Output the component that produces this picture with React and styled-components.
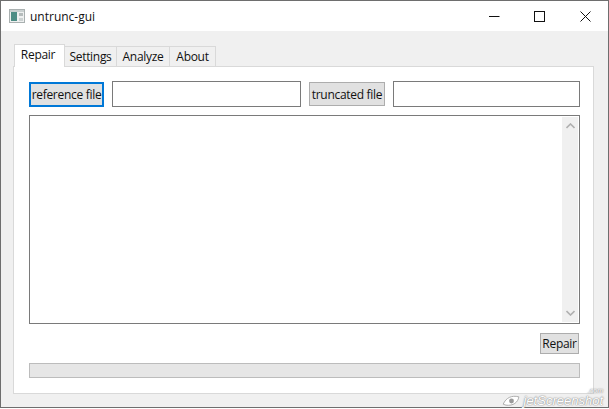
import React from "react";
import styled, { createGlobalStyle } from "styled-components";

const Global = createGlobalStyle`
  html, body { margin: 0; padding: 0; background: #fff; overflow: hidden; }
  * { box-sizing: border-box; }
`;

const Window = styled.div`
  position: relative;
  width: 609px;
  height: 408px;
  display: flex;
  flex-direction: column;
  border: 1px solid #6e6e6e;
  background: #f0f0f0;
  font-family: "Open Sans", "Noto Sans", sans-serif;
  font-size: 12px;
  letter-spacing: -0.3px;
  color: #111;
`;

const TitleBar = styled.div`
  height: 30px;
  display: flex;
  align-items: center;
  background: #fff;
  padding-left: 8px;
`;

const Title = styled.span`
  margin-left: 5px;
  flex: 1;
  font-size: 12px;
  letter-spacing: 0;
`;

const CaptionButton = styled.div`
  width: 45.5px;
  height: 30px;
  display: flex;
  align-items: center;
  justify-content: center;
`;

const Client = styled.div`
  flex: 1;
  display: flex;
  flex-direction: column;
  padding: 13px 14px 13px 12px;
`;

const TabBar = styled.div`
  display: flex;
  align-items: flex-end;
  padding-left: 1px;
  position: relative;
  z-index: 1;
  margin-bottom: -1px;
`;

const Tab = styled.div`
  width: ${(p) => p.$w}px;
  height: ${(p) => (p.$active ? 23 : 21)}px;
  display: flex;
  align-items: center;
  justify-content: center;
  background: ${(p) => (p.$active ? "#fff" : "#f0f0f0")};
  border: 1px solid #d9d9d9;
  border-bottom: ${(p) => (p.$active ? "none" : "1px solid #d9d9d9")};
  margin-left: ${(p) => (p.$active ? 0 : -1)}px;
  padding-bottom: ${(p) => (p.$active ? 3 : 0)}px;
  padding-right: ${(p) => (p.$active ? 3 : 0)}px;
`;

const Pane = styled.div`
  flex: 1;
  display: flex;
  flex-direction: column;
  background: #fff;
  border: 1px solid #d9d9d9;
  padding: 14px 13px 14px 15px;
`;

const FileRow = styled.div`
  display: flex;
  align-items: center;
  gap: 8px;
  height: 26px;
`;

const Button = styled.div`
  width: ${(p) => p.$w}px;
  height: ${(p) => p.$h}px;
  display: flex;
  align-items: center;
  justify-content: center;
  white-space: nowrap;
  background: #e1e1e1;
  border: ${(p) => (p.$focus ? "2px solid #0078d7" : "1px solid #adadad")};
`;

const PathInput = styled.div`
  flex: ${(p) => p.$grow};
  height: 26px;
  background: #fff;
  border: 1px solid #7a7a7a;
`;

const LogBox = styled.div`
  height: 209px;
  margin-top: 8px;
  display: flex;
  justify-content: flex-end;
  background: #fff;
  border: 1px solid #7a7a7a;
`;

const ScrollBar = styled.div`
  width: 16px;
  margin: 1px 1px 1px 0;
  background: #f0f0f0;
  display: flex;
  flex-direction: column;
  justify-content: space-between;
`;

const ScrollArrow = styled.div`
  height: 18px;
  display: flex;
  align-items: center;
  justify-content: center;
`;

const ActionRow = styled.div`
  display: flex;
  justify-content: flex-end;
  margin-top: 9px;
  padding-right: 1px;
`;

const Progress = styled.div`
  height: 15px;
  margin-top: 9px;
  background: #e6e6e6;
  border: 1px solid #bcbcbc;
`;

const Watermark = styled.div`
  position: absolute;
  right: 5px;
  bottom: 0;
  display: flex;
  align-items: center;
  gap: 3px;
  font-family: "Liberation Sans", sans-serif;
  font-style: italic;
  font-size: 13px;
  line-height: 13px;
  letter-spacing: 0;
  color: #fff;
  text-shadow: 0 0 1px #777, 0 0 2px #999;
`;

const WatermarkTld = styled.span`
  position: absolute;
  right: 0;
  top: -7px;
  font-size: 7px;
  line-height: 7px;
`;

const AppIcon = () => (
  <svg width="16" height="14" viewBox="0 0 16 14">
    <rect x="0.5" y="0.5" width="15" height="13" fill="#eef0f0" stroke="#a9b0b0" />
    <rect x="1" y="1" width="14" height="2" fill="#c9d0d0" />
    <rect x="2" y="3" width="6" height="9" fill="#4d8d85" />
    <rect x="10" y="4" width="4" height="3" fill="#b5bcbc" />
    <rect x="10" y="9" width="4" height="3" fill="#ccd2d2" />
  </svg>
);

const Chevron = ({ up }) => (
  <svg width="9" height="6" viewBox="0 0 9 6">
    <path d={up ? "M0.5 5 L4.5 1 L8.5 5" : "M0.5 1 L4.5 5 L8.5 1"} fill="none" stroke="#b0b0b0" strokeWidth="1.6" />
  </svg>
);

export default function App() {
  return (
    <>
      <Global />
      <Window>
        <TitleBar>
          <AppIcon />
          <Title>untrunc-gui</Title>
          <CaptionButton>
            <svg width="11" height="11" viewBox="0 0 11 11">
              <path d="M0 5.5 H10.5" stroke="#111" fill="none" />
            </svg>
          </CaptionButton>
          <CaptionButton>
            <svg width="11" height="11" viewBox="0 0 11 11">
              <rect x="0.5" y="0.5" width="10" height="10" stroke="#111" fill="none" />
            </svg>
          </CaptionButton>
          <CaptionButton>
            <svg width="11" height="11" viewBox="0 0 11 11">
              <path d="M0.5 0.5 L10.5 10.5 M10.5 0.5 L0.5 10.5" stroke="#111" fill="none" />
            </svg>
          </CaptionButton>
        </TitleBar>
        <Client>
          <TabBar>
            <Tab $active $w={51}>Repair</Tab>
            <Tab $w={53}>Settings</Tab>
            <Tab $w={54}>Analyze</Tab>
            <Tab $w={47}>About</Tab>
          </TabBar>
          <Pane>
            <FileRow>
              <Button $focus $w={75} $h={25}>reference file</Button>
              <PathInput $grow={189} />
              <Button $w={76} $h={24}>truncated file</Button>
              <PathInput $grow={187} />
            </FileRow>
            <LogBox>
              <ScrollBar>
                <ScrollArrow><Chevron up /></ScrollArrow>
                <ScrollArrow><Chevron /></ScrollArrow>
              </ScrollBar>
            </LogBox>
            <ActionRow>
              <Button $w={39} $h={21}>Repair</Button>
            </ActionRow>
            <Progress />
          </Pane>
        </Client>
        <Watermark>
          <svg width="19" height="12" viewBox="0 0 20 13">
            <path d="M1 10 C4 3 10 0 18 2 C17 8 12 12 4 11 Z" fill="#fff" stroke="#a8a8a8" />
            <circle cx="10" cy="6.5" r="2.6" fill="#9a9a9a" />
          </svg>
          jetScreenshot
          <WatermarkTld>.com</WatermarkTld>
        </Watermark>
      </Window>
    </>
  );
}
